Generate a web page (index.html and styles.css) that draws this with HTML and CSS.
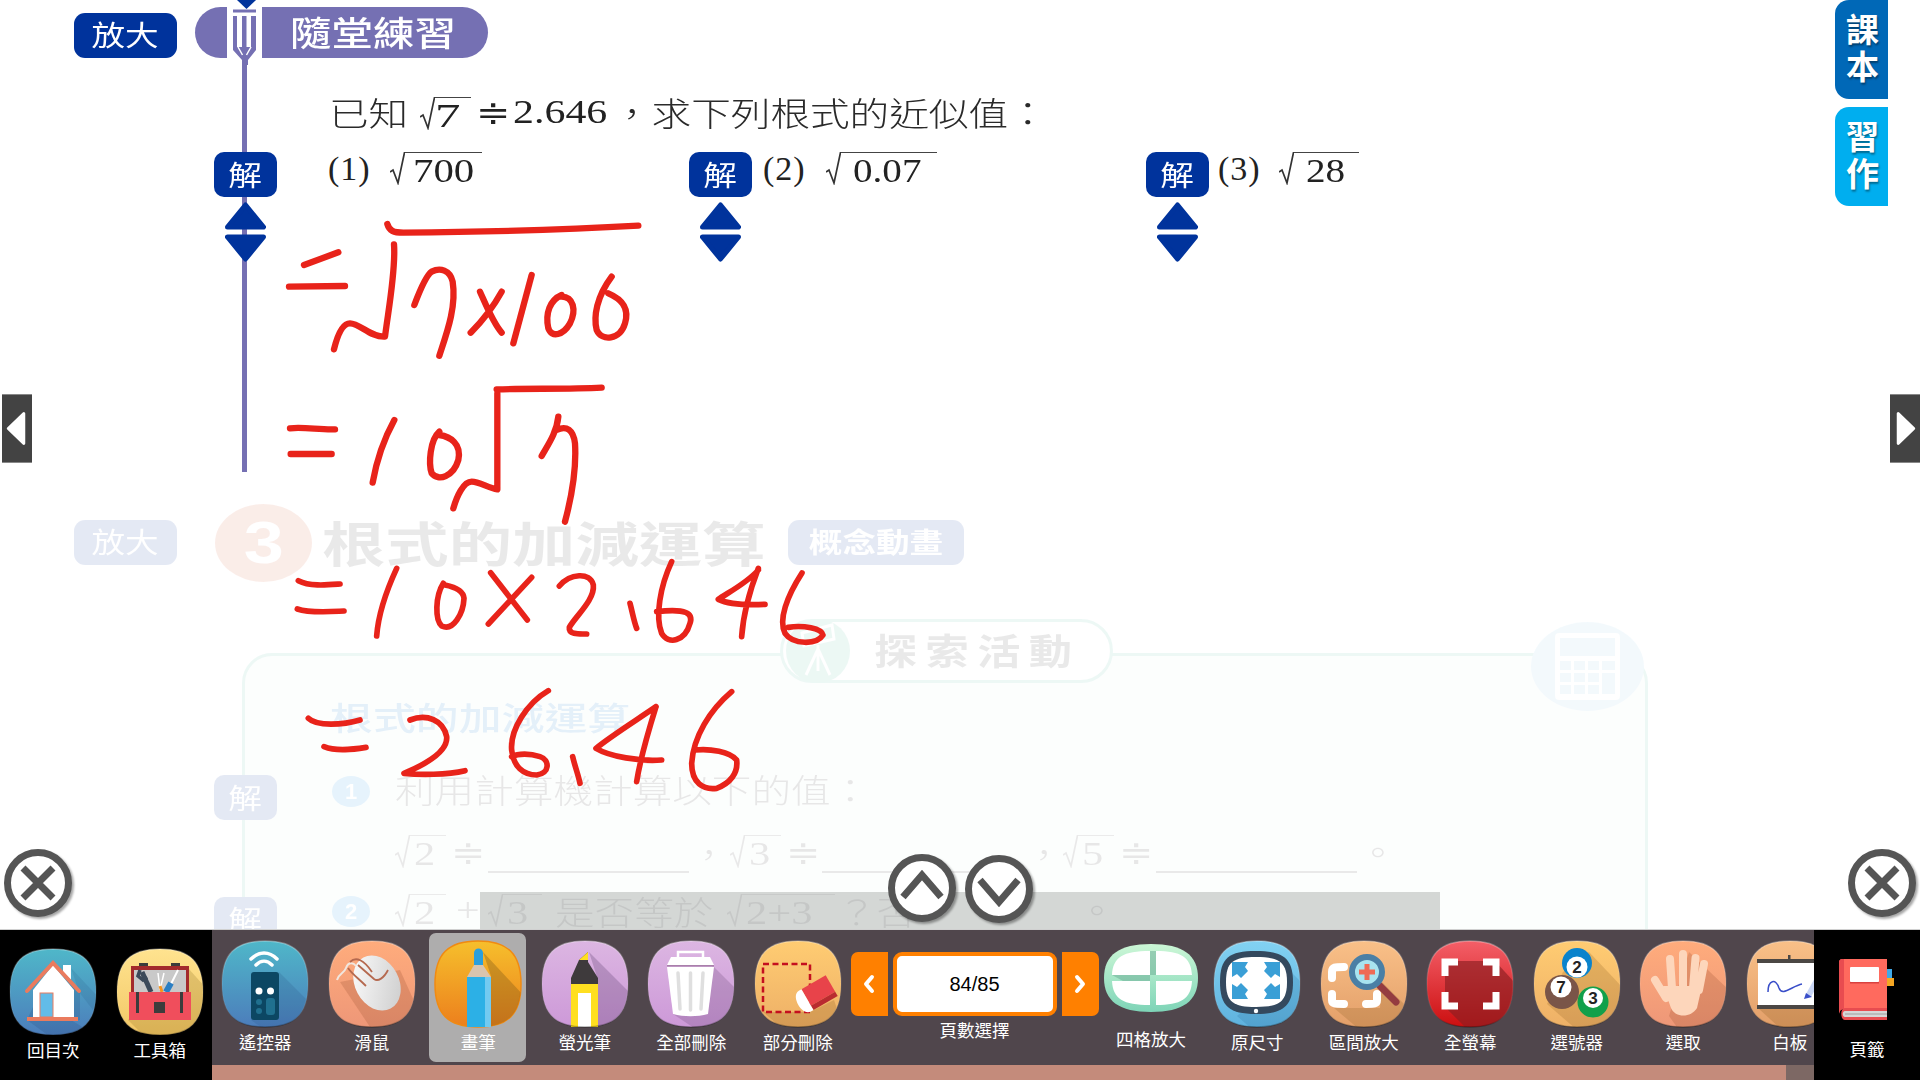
FILE: index.html
```html
<!DOCTYPE html>
<html lang="zh-Hant">
<head>
<meta charset="utf-8">
<title>隨堂練習</title>
<link rel="stylesheet" href="styles.css">
</head>
<body>
<svg class="defs" width="0" height="0" aria-hidden="true">
  <defs>
    <path id="sq" d="M44 1C74 1 87 14 87 44C87 74 74 87 44 87C14 87 1 74 1 44C1 14 14 1 44 1Z"/>
    <clipPath id="sqc"><use href="#sq"/></clipPath>
    <path id="wq" d="M48 1C80 1 95 12 95 35C95 58 80 69 48 69C16 69 1 58 1 35C1 12 16 1 48 1Z"/>
    <linearGradient id="edge" x1="0" y1="0" x2="0" y2="1"><stop offset="0" stop-color="#fff" stop-opacity=".3"/><stop offset=".6" stop-color="#fff" stop-opacity=".05"/><stop offset="1" stop-color="#000" stop-opacity=".3"/></linearGradient>
    <linearGradient id="gblue" x1="0" y1="0" x2="0" y2="1"><stop offset="0" stop-color="#4fb7c9"/><stop offset="1" stop-color="#4c7dbb"/></linearGradient>
    <linearGradient id="gyellow" x1="0" y1="0" x2="0" y2="1"><stop offset="0" stop-color="#ffe38f"/><stop offset="1" stop-color="#f2c766"/></linearGradient>
    <linearGradient id="gsalmon" x1="0" y1="0" x2="0" y2="1"><stop offset="0" stop-color="#ffac7c"/><stop offset="1" stop-color="#ee9778"/></linearGradient>
    <linearGradient id="gorange" x1="0" y1="0" x2="0" y2="1"><stop offset="0" stop-color="#f6bf2c"/><stop offset="1" stop-color="#ec7f1d"/></linearGradient>
    <linearGradient id="gpurple" x1="0" y1="0" x2="0" y2="1"><stop offset="0" stop-color="#dcb6e2"/><stop offset="1" stop-color="#cd99d8"/></linearGradient>
    <linearGradient id="gsand" x1="0" y1="0" x2="0" y2="1"><stop offset="0" stop-color="#ffcc72"/><stop offset="1" stop-color="#eeb067"/></linearGradient>
    <linearGradient id="gpeach" x1="0" y1="0" x2="0" y2="1"><stop offset="0" stop-color="#f9c088"/><stop offset="1" stop-color="#e39f69"/></linearGradient>
    <linearGradient id="gred" x1="0" y1="0" x2="0" y2="1"><stop offset="0" stop-color="#f45f68"/><stop offset="1" stop-color="#cc0f10"/></linearGradient>
    <linearGradient id="gsky" x1="0" y1="0" x2="0" y2="1"><stop offset="0" stop-color="#82d2f2"/><stop offset="1" stop-color="#5fb2de"/></linearGradient>
    <linearGradient id="gmint" x1="0" y1="0" x2="0" y2="1"><stop offset="0" stop-color="#ccf7d6"/><stop offset="1" stop-color="#7ed4b7"/></linearGradient>
    <linearGradient id="gmouse" x1="0" y1="0" x2="1" y2="1"><stop offset="0" stop-color="#fff"/><stop offset="1" stop-color="#c9c9c9"/></linearGradient>
  </defs>
</svg>

<div class="app">
  <main class="canvas">
    <section class="ghost">
      <div class="box"></div>
      <div class="pill-btn zoom2"><span class="sx">放大</span></div>
      <div class="num-badge"><span>3</span></div>
      <div class="t ghead">根式的加減運算</div>
      <div class="pill-btn concept"><span class="sx">概念動畫</span></div>
      <div class="explore">
        <svg class="explore-ic" viewBox="0 0 76 64"><circle cx="38" cy="32" r="32" fill="#4dbf9e"/><path d="M22 14L52 6L54 20L24 27ZM38 26V52M38 30L26 56M38 30L50 56" fill="none" stroke="#fff" stroke-width="3"/></svg>
        <span class="explore-tx">探索活動</span>
      </div>
      <div class="calc">
        <svg viewBox="0 0 113 89"><rect x="24" y="11" width="65" height="67" rx="4" fill="#fff"/><rect x="29" y="16" width="55" height="18" fill="#91cdeb"/><g fill="#91cdeb"><rect x="29" y="39" width="11" height="9"/><rect x="43" y="39" width="11" height="9"/><rect x="57" y="39" width="11" height="9"/><rect x="71" y="39" width="13" height="9"/><rect x="29" y="51" width="11" height="9"/><rect x="43" y="51" width="11" height="9"/><rect x="57" y="51" width="11" height="9"/><rect x="71" y="51" width="13" height="21"/><rect x="29" y="63" width="11" height="9"/><rect x="43" y="63" width="11" height="9"/><rect x="57" y="63" width="11" height="9"/></g></svg>
      </div>
      <div class="t subhead">根式的加減運算</div>
      <div class="sol-ghost s1"><span class="sx">解</span></div>
      <div class="sol-ghost s2"><span class="sx">解</span></div>
      <div class="dot d1">1</div>
      <div class="dot d2">2</div>
      <div class="t q g1">利用計算機計算以下的值：</div>

      <div class="rad a1 w36"><svg viewBox="0 0 15 33"><path d="M0 20L3 18L8 31L14.5 .5H15"/></svg><div class="rad-body short"><span>2</span></div></div>
      <div class="t eq e1">≑</div><div class="ul u1"></div>
      <div class="t q c1">，</div>
      <div class="rad a2 w36"><svg viewBox="0 0 15 33"><path d="M0 20L3 18L8 31L14.5 .5H15"/></svg><div class="rad-body short"><span>3</span></div></div>
      <div class="t eq e2">≑</div><div class="ul u2"></div>
      <div class="t q c2">，</div>
      <div class="rad a3 w36"><svg viewBox="0 0 15 33"><path d="M0 20L3 18L8 31L14.5 .5H15"/></svg><div class="rad-body short"><span>5</span></div></div>
      <div class="t eq e3">≑</div><div class="ul u3"></div>
      <div class="t q p1">。</div>

      <div class="rad a4 w36"><svg viewBox="0 0 15 33"><path d="M0 20L3 18L8 31L14.5 .5H15"/></svg><div class="rad-body short"><span>2</span></div></div>
      <div class="t n plus">+</div>
      <div class="rad a5 w39"><svg viewBox="0 0 15 33"><path d="M0 20L3 18L8 31L14.5 .5H15"/></svg><div class="rad-body short"><span>3</span></div></div>
      <div class="t q g2">是否等於</div>
      <div class="rad a6 w93"><svg viewBox="0 0 15 33"><path d="M0 20L3 18L8 31L14.5 .5H15"/></svg><div class="rad-body short"><span>2+3</span></div></div>
      <div class="t q g3">？否</div>
      <div class="t q p2">。</div>
    </section>
    <div class="ghost-bar"></div>

    <div class="pill-btn zoom1"><span class="sx">放大</span></div>
    <div class="guide"></div>
    <div class="banner">
      <svg class="pencil" viewBox="0 0 35 65">
        <path d="M10 0H29L19.500 9Z" fill="#00339c"/>
        <path d="M6 9.500H29V12.500H6ZM6 16H10V47H6ZM15 16H19.500V47H15ZM24 16H29V47H24Z" fill="#7570b3"/>
        <path d="M6 47H29V50L21 60V65H15V60L6 50Z" fill="#7570b3"/>
        <path d="M11 47L15.500 55M24 47L19.500 55" stroke="#fff" stroke-width="1.500"/>
      </svg>
      <span class="banner-tx">隨堂練習</span>
    </div>

    <div class="t q m1">已知</div>
    <div class="rad m2 w36"><svg viewBox="0 0 15 33"><path d="M0 20L3 18L8 31L14.5 .5H15"/></svg><div class="rad-body main"><span>7</span></div></div>
    <div class="t eq m3">≑</div>
    <div class="t n m4">2.646</div>
    <div class="t q m5">，求下列根式的近似值：</div>

    <div class="sol col1">
      <div class="sol-btn"><span class="sx">解</span></div>
      <svg class="tri" viewBox="0 0 41 28"><path d="M20.500 3L38.500 25H2.500Z"/></svg>
      <svg class="tri down" viewBox="0 0 41 28"><path d="M2.500 3H38.500L20.500 25Z"/></svg>
    </div>
    <div class="t par p-a">(1)</div>
    <div class="rad r1 w77"><svg viewBox="0 0 15 33"><path d="M0 20L3 18L8 31L14.5 .5H15"/></svg><div class="rad-body wide-digits"><span>700</span></div></div>

    <div class="sol col2">
      <div class="sol-btn"><span class="sx">解</span></div>
      <svg class="tri" viewBox="0 0 41 28"><path d="M20.500 3L38.500 25H2.500Z"/></svg>
      <svg class="tri down" viewBox="0 0 41 28"><path d="M2.500 3H38.500L20.500 25Z"/></svg>
    </div>
    <div class="t par p-b">(2)</div>
    <div class="rad r2 w96"><svg viewBox="0 0 15 33"><path d="M0 20L3 18L8 31L14.5 .5H15"/></svg><div class="rad-body"><span>0.07</span></div></div>

    <div class="sol col3">
      <div class="sol-btn"><span class="sx">解</span></div>
      <svg class="tri" viewBox="0 0 41 28"><path d="M20.500 3L38.500 25H2.500Z"/></svg>
      <svg class="tri down" viewBox="0 0 41 28"><path d="M2.500 3H38.500L20.500 25Z"/></svg>
    </div>
    <div class="t par p-c">(3)</div>
    <div class="rad r3 w65"><svg viewBox="0 0 15 33"><path d="M0 20L3 18L8 31L14.5 .5H15"/></svg><div class="rad-body"><span>28</span></div></div>

    <svg class="ink" viewBox="0 0 1920 930">
      <g transform="translate(280 210) scale(.33333)" stroke-width="19">
        <path d="M322 42C328 62 340 68 370 68C600 66 850 60 1075 47"/>
        <path d="M72 165L175 127"/>
        <path d="M27 230L195 228"/>
        <path d="M162 418C170 385 185 340 210 340C240 340 270 382 315 380C325 300 348 180 342 103"/>
        <path d="M403 285C420 240 440 195 455 185C480 172 510 180 518 215C530 290 500 370 478 437"/>
        <path d="M600 245C620 290 640 340 665 368M665 245C640 290 600 340 572 368"/>
        <path d="M755 195L700 400"/>
        <path d="M845 255C810 270 795 310 805 355C815 385 850 375 870 340C890 300 880 260 845 260"/>
        <path d="M995 200C950 260 940 320 950 360C965 395 1020 390 1035 340C1050 290 1020 265 985 250"/>
        <path d="M30 655C70 650 120 660 165 658M32 732L155 732"/>
        <path d="M343 630C310 690 290 750 278 818"/>
        <path d="M478 665C450 690 445 760 455 790C475 815 520 800 535 750C545 700 510 680 478 675"/>
        <path d="M520 895C530 860 550 815 575 815C600 815 625 835 652 838L652 550M650 538C750 535 870 538 965 533"/>
        <path d="M835 620C830 670 800 710 785 738M830 660C860 645 880 660 885 700C890 780 875 860 855 935"/>
      </g>
      <g transform="translate(280 540) scale(.33333)" stroke-width="17">
        <path d="M55 122C90 140 140 135 180 132M52 207C90 220 150 215 192 213"/>
        <path d="M350 85C320 150 295 220 290 288"/>
        <path d="M490 130C465 170 465 240 485 258C520 275 550 220 552 175C550 150 520 140 495 135"/>
        <path d="M632 98L742 240M755 112L625 252"/>
        <path d="M838 138C870 100 930 95 940 135C945 180 885 230 868 262C865 285 900 282 920 282"/>
        <path d="M1050 190C1058 220 1062 245 1070 265"/>
        <path d="M1175 65C1140 140 1125 230 1145 280C1165 315 1215 305 1230 250C1240 220 1220 205 1130 215"/>
        <path d="M1435 90C1400 130 1340 160 1315 178C1350 195 1410 195 1455 193M1435 85C1410 150 1390 220 1385 290"/>
        <path d="M1566 99C1520 170 1495 240 1515 280C1540 315 1610 315 1629 285C1625 265 1570 255 1525 262"/>
        <path d="M85 535C110 560 190 555 240 540M132 620C170 635 220 628 258 622"/>
        <path d="M390 540C440 520 490 540 500 590C505 640 420 680 372 700C420 705 500 705 555 692"/>
        <path d="M805 452C740 490 690 570 695 630C700 680 730 705 770 705C810 700 810 660 780 650C750 640 715 640 695 650"/>
        <path d="M878 650C885 680 895 705 900 730"/>
        <path d="M1128 500C1070 540 990 590 948 625C990 650 1080 665 1145 660M1128 500C1100 590 1080 660 1070 725"/>
        <path d="M1355 455C1290 510 1240 590 1235 670C1235 730 1270 750 1310 745C1350 730 1375 700 1370 660C1350 635 1290 625 1245 630"/>
      </g>
    </svg>

    <div class="tab tab-a">課本</div>
    <div class="tab tab-b">習作</div>

    <div class="edge-arrow left"><svg viewBox="0 0 30 69"><path d="M22 19V50L6 34.500Z"/></svg></div>
    <div class="edge-arrow right"><svg viewBox="0 0 30 69"><path d="M8 19V50L24 34.500Z"/></svg></div>

    <svg class="round close-l" viewBox="0 0 70 70"><circle cx="35" cy="35" r="30.500"/><path d="M20 20L50 50M50 20L20 50"/></svg>
    <svg class="round close-r" viewBox="0 0 70 70"><circle cx="35" cy="35" r="30.500"/><path d="M20 20L50 50M50 20L20 50"/></svg>
    <svg class="round up" viewBox="0 0 70 70"><circle cx="35" cy="35" r="30.500"/><path d="M16 44L35 22L54 44"/></svg>
    <svg class="round dn" viewBox="0 0 70 70"><circle cx="35" cy="35" r="30.500"/><path d="M16 26L35 48L54 26"/></svg>
  </main>

  <footer class="toolbar">
    <div class="dock dock-left">
      <div class="tool">
        <svg class="ic" viewBox="0 0 88 88"><use href="#sq" fill="url(#gblue)"/><g clip-path="url(#sqc)"><path d="M44 15L71 44V72H62L88 88H40L18 72Z" fill="#1c3f6e" opacity=".18"/><path d="M62 20L90 50V70L70 44Z" fill="#1c3f6e" opacity=".12"/></g><path d="M54 17H62V32L54 24Z" fill="#fff"/><path d="M44 17L65 42V69H24V42Z" fill="#fff"/><path d="M18 43L44 15L70 43" fill="none" stroke="#ea7b5e" stroke-width="4" stroke-linecap="round"/><rect x="31" y="45" width="13" height="24" fill="#62bce8" stroke="#ea7b5e"/><rect x="18" y="69" width="51" height="4" fill="#ea7b5e"/><use href="#sq" fill="none" stroke="url(#edge)" stroke-width="1.500"/></svg>
        <span class="lbl">回目次</span>
      </div>
      <div class="tool">
        <svg class="ic" viewBox="0 0 88 88"><use href="#sq" fill="url(#gyellow)"/><g clip-path="url(#sqc)"><path d="M72 20L90 40V90H30L12 72Z" fill="#7a5a10" opacity=".2"/></g><rect x="23" y="15" width="9" height="5" fill="#3c3c3c"/><rect x="55" y="15" width="9" height="5" fill="#3c3c3c"/><rect x="15" y="18" width="58" height="27" fill="#a32a2c"/><rect x="18" y="22" width="52" height="23" fill="#c9c9c9"/><path d="M26 24L35 44" stroke="#3c4a5a" stroke-width="5"/><path d="M24 22L22 28L27 32L31 29" fill="none" stroke="#3c4a5a" stroke-width="3.500"/><path d="M42 25L44 42M48 25L44 42" stroke="#fff" stroke-width="1.500"/><path d="M44 38L46 44" stroke="#f7941d" stroke-width="3"/><path d="M62 22L52 42" stroke="#fff" stroke-width="2"/><path d="M55 35L50 44" stroke="#2b7fc4" stroke-width="6"/><rect x="13" y="44" width="62" height="28" fill="#f04e5c"/><rect x="20" y="44" width="3" height="21" fill="#3c3c3c"/><rect x="64" y="44" width="3" height="21" fill="#3c3c3c"/><rect x="38" y="54" width="11" height="11" fill="#3c3c3c"/><use href="#sq" fill="none" stroke="url(#edge)" stroke-width="1.500"/></svg>
        <span class="lbl">工具箱</span>
      </div>
    </div>

    <div class="dock-mid">
      <div class="dock-row">
        <div class="tool">
          <svg class="ic" viewBox="0 0 88 88"><use href="#sq" fill="url(#gblue)"/><g clip-path="url(#sqc)"><path d="M58 32L90 64V90H44L30 80Z" fill="#1c3f6e" opacity=".15"/></g><path d="M30 19C38 11 48 11 56 19M35 25C40 20 46 20 51 25" fill="none" stroke="#fff" stroke-width="3.500" stroke-linecap="round"/><rect x="30" y="32" width="28" height="48" rx="3" fill="#0c4763"/><circle cx="38" cy="51" r="3.500" fill="#fff"/><circle cx="49.500" cy="51" r="3.500" fill="#fff"/><circle cx="38" cy="62" r="3" fill="#20708f"/><circle cx="38" cy="71" r="3" fill="#20708f"/><rect x="45" y="58" width="9" height="17" rx="3" fill="#20708f"/><use href="#sq" fill="none" stroke="url(#edge)" stroke-width="1.500"/></svg>
          <span class="lbl">遙控器</span>
        </div>
        <div class="tool">
          <svg class="ic" viewBox="0 0 88 88"><use href="#sq" fill="url(#gsalmon)"/><g clip-path="url(#sqc)"><path d="M12 42L72 30L90 70V90H44Z" fill="#a4593a" opacity=".28"/></g><ellipse cx="49" cy="43" rx="22" ry="29" transform="rotate(-28 49 43)" fill="url(#gmouse)"/><path d="M30 25L46 39C50 42 56 38 60 30" fill="none" stroke="#b5694f" stroke-width="1.800"/><path d="M9 40C10 34 16 34 18 28C20 22 25 22 28 26" fill="none" stroke="#f0e6de" stroke-width="2"/><path d="M22 22C28 16 36 20 44 32M20 28C24 34 30 38 38 46" fill="none" stroke="#b5694f" stroke-width="1.800"/><use href="#sq" fill="none" stroke="url(#edge)" stroke-width="1.500"/></svg>
          <span class="lbl">滑鼠</span>
        </div>
        <div class="tool active">
          <svg class="ic" viewBox="0 0 88 88"><use href="#sq" fill="url(#gorange)" stroke="#f08a12" stroke-width="1.500"/><g clip-path="url(#sqc)"><path d="M49 12L90 56V90H57V36Z" fill="#7c5a18" opacity=".35"/></g><path d="M40 13A4.500 4.500 0 0 1 49 13V26H40Z" fill="#2b9fdc"/><path d="M40 25H49L57 37H33Z" fill="#d9c4ae"/><rect x="33" y="37" width="24" height="50" fill="#2cb0e6"/><rect x="51" y="37" width="6" height="50" fill="#72caf1"/></svg>
          <span class="lbl">畫筆</span>
        </div>
        <div class="tool">
          <svg class="ic" viewBox="0 0 88 88"><use href="#sq" fill="url(#gpurple)"/><g clip-path="url(#sqc)"><path d="M48 12L90 54V90H57V40Z" fill="#5a3d6b" opacity=".28"/></g><path d="M38 20L47 12V22L57 38V44H30V38Z" fill="#3e3a3c"/><path d="M38 20L47 12V20H38Z" fill="#ffdf20"/><rect x="30" y="44" width="27" height="43" fill="#ffdf20"/><rect x="37" y="53" width="13" height="34" fill="#fff"/><use href="#sq" fill="none" stroke="url(#edge)" stroke-width="1.500"/></svg>
          <span class="lbl">螢光筆</span>
        </div>
        <div class="tool">
          <svg class="ic" viewBox="0 0 88 88"><use href="#sq" fill="url(#gpurple)"/><g clip-path="url(#sqc)"><path d="M66 26L90 50V90H50L26 74Z" fill="#5a3d6b" opacity=".22"/></g><path d="M31 18V12H56V18" fill="none" stroke="#fff" stroke-width="2.500"/><path d="M24 17H63L67 25H20Z" fill="#fff"/><rect x="20" y="25" width="47" height="1.500" fill="#a880aa"/><path d="M20 27H67L61 74C50 77 37 77 26 74Z" fill="#fff"/><path d="M31 33L33 69M43.500 33V70M56 33L54 69" stroke="#dfdfdf" stroke-width="3.500" stroke-linecap="round"/><use href="#sq" fill="none" stroke="url(#edge)" stroke-width="1.500"/></svg>
          <span class="lbl">全部刪除</span>
        </div>
        <div class="tool">
          <svg class="ic" viewBox="0 0 88 88"><use href="#sq" fill="url(#gsand)"/><g clip-path="url(#sqc)"><path d="M9 72H56L80 60L90 90H30Z" fill="#8a5a20" opacity=".25"/></g><rect x="9" y="24" width="47" height="48" fill="none" stroke="#c40f1f" stroke-width="2.500" stroke-dasharray="6 3.500"/><g transform="rotate(-30 60 57)"><path d="M53 44H81V63H53Z" fill="#e8434a"/><path d="M53 63H81L81 68H53Z" fill="#b92b30"/><path d="M53 44V68H50C40 68 40 44 50 44Z" fill="#fff"/></g><use href="#sq" fill="none" stroke="url(#edge)" stroke-width="1.500"/></svg>
          <span class="lbl">部分刪除</span>
        </div>

        <div class="pager">
          <div class="pager-row">
            <div class="pg-btn prev"><svg viewBox="0 0 12 20"><path d="M9 3L3 10L9 17"/></svg></div>
            <div class="pg-field">84/85</div>
            <div class="pg-btn next"><svg viewBox="0 0 12 20"><path d="M3 3L9 10L3 17"/></svg></div>
          </div>
          <span class="lbl">頁數選擇</span>
        </div>

        <div class="tool wide">
          <svg class="ic-wide" viewBox="0 0 96 70"><use href="#wq" fill="url(#gmint)"/><path d="M47 8C20 8 10 14 9 32H47ZM53 8V32H89C88 14 78 8 53 8ZM9 38C10 56 20 62 47 62V38ZM53 38V62C78 62 88 56 89 38Z" fill="#fff"/><path d="M47 8H53V32L47 32ZM9 32H47V38H20Z" fill="#6fae97" opacity=".55"/></svg>
          <span class="lbl">四格放大</span>
        </div>
        <div class="tool">
          <svg class="ic" viewBox="0 0 88 88"><use href="#sq" fill="url(#gsky)"/><g clip-path="url(#sqc)"><path d="M76 30L90 44V90H40L24 76Z" fill="#1c5f8e" opacity=".18"/></g><path d="M43 11C70 11 80 18 80 42C80 66 70 74 43 74C16 74 7 66 7 42C7 18 16 11 43 11Z" fill="#34495e"/><path d="M43 17C66 17 74 22 74 42C74 62 66 67 43 67C20 67 13 62 13 42C13 22 20 17 43 17Z" fill="#fff"/><circle cx="43" cy="71" r="2.200" fill="#fff"/><g fill="#3a9fd6"><path d="M19 22H35L32 27L35 31L28 38L24 34L19 37Z"/><path d="M67 22H51L54 27L51 31L58 38L62 34L67 37Z"/><path d="M19 59H35L32 54L35 50L28 43L24 47L19 44Z"/><path d="M67 59H51L54 54L51 50L58 43L62 47L67 44Z"/></g><use href="#sq" fill="none" stroke="url(#edge)" stroke-width="1.500"/></svg>
          <span class="lbl">原尺寸</span>
        </div>
        <div class="tool">
          <svg class="ic" viewBox="0 0 88 88"><use href="#sq" fill="url(#gpeach)"/><g clip-path="url(#sqc)"><path d="M14 68H60L62 42L90 70V90H40Z" fill="#8a5a20" opacity=".22"/></g><path d="M12 38V32C12 27 15 27 24 27M12 54V60C12 64 15 64 24 64M57 54V60C57 64 54 64 46 64" fill="none" stroke="#fff" stroke-width="8" stroke-linecap="round"/><path d="M60 46L76 62" stroke="#943c40" stroke-width="7" stroke-linecap="round"/><circle cx="47" cy="32" r="15" fill="#a8e4f0" stroke="#4a7fa5" stroke-width="6"/><path d="M47 24V40M39 32H55" stroke="#ef6a55" stroke-width="5"/><use href="#sq" fill="none" stroke="url(#edge)" stroke-width="1.500"/></svg>
          <span class="lbl">區間放大</span>
        </div>
        <div class="tool">
          <svg class="ic" viewBox="0 0 88 88"><use href="#sq" fill="url(#gred)"/><g clip-path="url(#sqc)"><path d="M19 21H69L90 44V90H42L19 67Z" fill="#8a1f22" opacity=".65"/></g><path d="M32 22H19V36M57 22H70V36M19 52V66H32M70 52V66H57" fill="none" stroke="#fff" stroke-width="7"/><use href="#sq" fill="none" stroke="url(#edge)" stroke-width="1.500"/></svg>
          <span class="lbl">全螢幕</span>
        </div>
        <div class="tool">
          <svg class="ic" viewBox="0 0 88 88"><use href="#sq" fill="url(#gsand)"/><g clip-path="url(#sqc)"><path d="M56 12L90 48V90H44L14 64L30 32Z" fill="#8a5a20" opacity=".22"/></g><circle cx="44" cy="23" r="15" fill="#0a83cc"/><circle cx="44" cy="27" r="10.500" fill="#fff"/><text class="ball" x="44" y="33">2</text><circle cx="29" cy="52" r="17" fill="#7a5548"/><circle cx="28" cy="47" r="10.500" fill="#fff"/><text class="ball" x="28" y="53">7</text><circle cx="60" cy="62" r="15.500" fill="#12a04a"/><circle cx="60" cy="58" r="10" fill="#fff"/><text class="ball" x="60" y="64">3</text><use href="#sq" fill="none" stroke="url(#edge)" stroke-width="1.500"/></svg>
          <span class="lbl">選號器</span>
        </div>
        <div class="tool">
          <svg class="ic" viewBox="0 0 88 88"><use href="#sq" fill="url(#gsalmon)"/><g clip-path="url(#sqc)"><path d="M50 12L90 50V90H40L30 76Z" fill="#a4593a" opacity=".28"/></g><path d="M31 19L33 48M44 14V48M56.500 18L54 48M65 24L60 50M16 40L27 58" stroke="#fdd6bb" stroke-width="8" stroke-linecap="round"/><path d="M24 46H63L58 68C52 78 36 78 32 68Z" fill="#fdd6bb"/><use href="#sq" fill="none" stroke="url(#edge)" stroke-width="1.500"/></svg>
          <span class="lbl">選取</span>
        </div>
        <div class="tool">
          <svg class="ic" viewBox="0 0 88 88"><use href="#sq" fill="url(#gpeach)"/><g clip-path="url(#sqc)"><path d="M12 68H80V90H36Z" fill="#8a5a20" opacity=".25"/></g><rect x="42" y="15" width="2.500" height="5" fill="#4b4744"/><rect x="11" y="19" width="77" height="4" fill="#4b4744"/><rect x="12" y="23" width="76" height="42" fill="#fff"/><rect x="11" y="65" width="77" height="4" fill="#4b4744"/><path d="M22 52C22 40 30 38 33 48C36 57 46 46 56 44" fill="none" stroke="#3a4fc9" stroke-width="1.500"/><path d="M60 54L70 36L75 39L65 57Z" fill="#c9d6f5"/><path d="M58 59L60 53L66 57Z" fill="#3a4fc9"/><use href="#sq" fill="none" stroke="url(#edge)" stroke-width="1.500"/></svg>
          <span class="lbl">白板</span>
        </div>
      </div>
      <div class="dock-strip"><div class="strip-a"></div><div class="strip-b"></div></div>
    </div>

    <div class="dock dock-right">
      <div class="tool book">
        <svg class="ic-book" viewBox="0 0 56 62"><rect x="48" y="10" width="5" height="9" fill="#3fa9e8"/><rect x="48" y="19" width="7" height="8" fill="#f5a623"/><path d="M2 0H48V50H5C2 50 0 52 0 56V2Z" fill="#ff6a5e"/><path d="M2 0H5V50C2 50 0 52 0 56V2Z" fill="#e84c50"/><rect x="11" y="8" width="29" height="15" rx="1" fill="#fff"/><rect x="11" y="23" width="29" height="1.500" fill="#d9413f"/><path d="M48 49H6C1 49 1 61 6 61H48Z" fill="#e84c50"/><path d="M48 52H6C3 52 3 58 6 58H48Z" fill="#d6d6d6"/><path d="M6 55H48" stroke="#9e9e9e"/></svg>
        <span class="lbl">頁籤</span>
      </div>
    </div>
  </footer>
</div>
</body>
</html>
```

FILE: styles.css
```css
* { box-sizing: border-box; }
html, body { margin: 0; height: 100%; background: #fff; overflow: hidden; }
body { font-family: "Noto Sans CJK TC", "Noto Sans", sans-serif; }

.defs { position: absolute; }
.app { display: flex; flex-direction: column; width: 1920px; height: 1080px; }

/* ---------- canvas ---------- */
.canvas { position: relative; flex: none; height: 930px; overflow: hidden; border-bottom: 1px solid #d0d0d0; }
.t { position: absolute; white-space: nowrap; line-height: 1; transform-origin: left center; }
.sx { display: inline-block; transform: scaleX(1.2); line-height: 1; }
.q { font-size: 33px; font-weight: 300; color: #2a2a2a; transform: scaleX(1.2); }
.n { font-family: "Liberation Serif", serif; font-size: 33px; color: #222; transform: scaleX(1.27); }
.eq { font-family: "DejaVu Sans", sans-serif; font-size: 33px; color: #222; transform: scaleX(1.25); }
.par { font-family: "Liberation Serif", serif; font-size: 34px; color: #222; top: 152px; letter-spacing: 1px; }

.pill-btn { position: absolute; display: flex; align-items: center; justify-content: center; height: 45px; padding-bottom: 3px; border-radius: 11px; background: #00339c; color: #fff; font-size: 28px; }
.zoom1 { left: 74px; top: 13px; width: 103px; }

.guide { position: absolute; left: 242px; top: 60px; width: 5px; height: 412px; background: #7570b3; }
.banner { position: absolute; left: 195px; top: 7px; width: 293px; height: 51px; border-radius: 26px; background: #7570b3; }
.pencil { position: absolute; left: 32px; top: -7px; width: 35px; height: 65px; background: #fff; }
.banner-tx { position: absolute; left: 95px; top: 8px; font-size: 34px; line-height: 1; font-weight: 500; color: #fff; transform: scaleX(1.22); transform-origin: left center; white-space: nowrap; }

.m1 { left: 329px; top: 96px; }
.m2 { left: 420px; top: 97px; }
.m3 { left: 476px; top: 96px; }
.m4 { left: 513px; top: 96px; }
.m5 { left: 612px; top: 96px; }

.rad { position: absolute; display: flex; height: 34px; }
.rad svg { flex: none; width: 15px; height: 33px; }
.rad svg path { fill: none; stroke: #333; stroke-width: 1.700; }
.rad-body { height: 33px; border-top: 1px solid #444; font-family: "Liberation Serif", serif; font-size: 34px; line-height: 1; color: #222; white-space: nowrap; }
.rad-body span { display: inline-block; margin: 1px 0 0 12px; transform: scaleX(1.15); transform-origin: left center; }
.rad-body.wide-digits span { margin-left: 8px; transform: scaleX(1.2); }
.rad-body.short span { margin-left: 4px; transform: scaleX(1.25); }
.rad-body.main span { margin-left: 0; font-size: 34px; transform: scaleX(1.5); }
.w36 .rad-body { width: 36px; }
.w39 .rad-body { width: 39px; }
.w65 .rad-body { width: 65px; }
.w77 .rad-body { width: 77px; }
.w93 .rad-body { width: 93px; }
.w96 .rad-body { width: 96px; }
.r1 { left: 390px; top: 152px; }
.r2 { left: 826px; top: 152px; }
.r3 { left: 1279px; top: 152px; }
.p-a { left: 328px; }
.p-b { left: 763px; }
.p-c { left: 1218px; }

.sol { position: absolute; top: 152px; display: flex; flex-direction: column; align-items: center; width: 63px; }
.col1 { left: 214px; }
.col2 { left: 689px; }
.col3 { left: 1146px; }
.sol-btn { display: flex; align-items: center; justify-content: center; width: 63px; height: 45px; padding-bottom: 2px; border-radius: 10px; background: #00339c; color: #fff; font-size: 28px; }
.tri { flex: none; width: 41px; height: 28px; margin-top: 5px; }
.tri.down { margin-top: 4px; }
.tri path { fill: #00339c; stroke: #00339c; stroke-width: 5; stroke-linejoin: round; }

.ink { position: absolute; left: 0; top: 0; width: 1920px; height: 930px; pointer-events: none; }
.ink path { fill: none; stroke: #e8231a; stroke-linecap: round; stroke-linejoin: round; }

/* ---------- faded section ---------- */
.ghost { position: absolute; inset: 0; opacity: .1; }
.ghost .q, .ghost .n, .ghost .eq { color: #222; }
.zoom2 { left: 74px; top: 520px; width: 103px; }
.concept { left: 788px; top: 520px; width: 176px; font-weight: 700; }
.num-badge { position: absolute; left: 215px; top: 504px; width: 97px; height: 78px; border-radius: 50%; background: #d7552d; display: flex; align-items: center; justify-content: center; }
.num-badge span { font-family: "Liberation Sans", sans-serif; font-weight: 700; font-size: 60px; line-height: 1; color: #fff; transform: scaleX(1.2); }
.ghead { left: 322px; top: 517px; font-size: 48px; font-weight: 700; color: #333; transform: scaleX(1.32); }
.box { position: absolute; left: 242px; top: 653px; width: 1406px; height: 400px; border: 3px solid #55c0a8; border-radius: 30px; background: #ebf6f3; }
.explore { position: absolute; left: 780px; top: 619px; width: 333px; height: 64px; border: 3px solid #55c0a8; border-radius: 32px; background: #fff; }
.explore-ic { position: absolute; left: -3px; top: -3px; width: 76px; height: 64px; }
.explore-tx { position: absolute; left: 91px; top: 9px; font-size: 36px; line-height: 1; font-weight: 700; color: #333; letter-spacing: 7px; white-space: nowrap; transform: scaleX(1.2); transform-origin: left center; }
.calc { position: absolute; left: 1531px; top: 622px; width: 113px; height: 89px; border-radius: 50%; background: #91cdeb; }
.calc svg { display: block; width: 113px; height: 89px; }
.subhead { left: 330px; top: 700px; font-size: 32px; font-weight: 500; color: #0073cd; transform: scaleX(1.34); }
.sol-ghost { position: absolute; left: 214px; width: 63px; height: 45px; padding-bottom: 2px; border-radius: 10px; background: #00339c; color: #fff; font-size: 28px; display: flex; align-items: center; justify-content: center; }
.s1 { top: 775px; }
.s2 { top: 897px; }
.dot { position: absolute; left: 332px; width: 38px; height: 31px; border-radius: 50%; background: #1296e8; color: #fff; font: 700 22px/31px "Liberation Sans", sans-serif; text-align: center; }
.d1 { top: 776px; }
.d2 { top: 896px; }
.g1 { left: 395px; top: 773px; }
.a1 { left: 395px; top: 835px; }
.a2 { left: 730px; top: 835px; }
.a3 { left: 1063px; top: 835px; }
.a4 { left: 395px; top: 894px; }
.a5 { left: 488px; top: 894px; }
.a6 { left: 727px; top: 894px; }
.e1 { left: 451px; top: 836px; }
.e2 { left: 786px; top: 836px; }
.e3 { left: 1119px; top: 836px; }
.ul { position: absolute; top: 871px; height: 2px; background: #333; }
.u1 { left: 488px; width: 201px; }
.u2 { left: 822px; width: 201px; }
.u3 { left: 1156px; width: 201px; }
.c1 { left: 689px; top: 837px; }
.c2 { left: 1024px; top: 837px; }
.p1 { left: 1358px; top: 835px; }
.p2 { left: 1077px; top: 893px; }
.plus { left: 456px; top: 894px; }
.g2 { left: 555px; top: 895px; }
.g3 { left: 837px; top: 895px; }
.ghost-bar { position: absolute; left: 480px; top: 892px; width: 960px; height: 37px; background: rgba(118, 126, 122, .3); }

/* ---------- side tabs & buttons ---------- */
.tab { position: absolute; left: 1835px; width: 53px; height: 99px; padding-left: 1px; border-radius: 14px 0 0 14px; display: flex; align-items: center; justify-content: center; writing-mode: vertical-rl; color: #fff; font-size: 33px; font-weight: 700; letter-spacing: 3.500px; line-height: 1; text-shadow: 1px 2px 2px rgba(0, 0, 0, .4); }
.tab-a { top: 0; background: #0068b7; }
.tab-b { top: 107px; background: #00aeef; }

.edge-arrow { position: absolute; top: 394px; width: 30px; height: 69px; background: #434343; border-top: 1px solid #888; border-bottom: 1px solid #888; }
.edge-arrow.left { left: 2px; }
.edge-arrow.right { left: 1890px; }
.edge-arrow svg { display: block; width: 30px; height: 67px; }
.edge-arrow path { fill: #fff; stroke: #fff; stroke-width: 3; stroke-linejoin: round; }

.round { position: absolute; width: 70px; height: 70px; filter: drop-shadow(2px 2px 1px rgba(0, 0, 0, .35)); }
.round circle { fill: #fff; stroke: #555; stroke-width: 7; }
.round path { fill: none; stroke: #555; stroke-width: 7; }
.close-l { left: 3px; top: 848px; }
.close-r { left: 1847px; top: 848px; }
.up { left: 887px; top: 853px; }
.dn { left: 964px; top: 854px; }

/* ---------- toolbar ---------- */
.toolbar { display: flex; flex: none; height: 150px; background: #50464c; }
.dock { display: flex; flex: none; padding-top: 18px; background: #000; }
.dock-left { width: 212px; }
.dock-right { width: 106px; }
.dock-mid { display: flex; flex-direction: column; flex: 1; min-width: 0; overflow: hidden; }
.dock-row { display: flex; flex: none; height: 135px; padding-top: 10px; }
.dock-strip { display: flex; flex: none; height: 15px; }
.strip-a { flex: 1; background: #c48b7b; }
.strip-b { flex: none; width: 28px; background: #7d6864; }

.tool { position: relative; display: flex; flex-direction: column; align-items: center; flex: none; width: 106.500px; }
.ic { position: relative; display: block; flex: none; width: 88px; height: 88px; }
.lbl { position: relative; display: block; margin-top: 2px; color: #fff; font-size: 17.500px; line-height: 24px; white-space: nowrap; }
.tool.active::before { content: ""; position: absolute; left: 4px; top: -7px; width: 97px; height: 129px; border-radius: 7px; background: #aeadad; }
.tool.wide { width: 106px; }
.ic-wide { display: block; width: 96px; height: 70px; margin-top: 3px; }
.wide .lbl { margin-top: 14px; }
.dock-right .tool { width: 106px; }
.ic-book { display: block; width: 56px; height: 62px; margin: 11px 0 16px; }
.book .lbl { margin-top: 0; }
.ball { font-family: "Liberation Sans", sans-serif; font-weight: 700; font-size: 17px; fill: #222; text-anchor: middle; }

.pager { display: flex; flex-direction: column; align-items: center; flex: none; width: 247px; }
.pager-row { display: flex; gap: 5px; margin-top: 12px; height: 64px; }
.pager .lbl { margin-top: 2px; }
.pg-btn { display: flex; align-items: center; justify-content: center; width: 37px; background: #ff8000; }
.pg-btn svg { width: 12px; height: 20px; }
.pg-btn path { fill: none; stroke: #fff; stroke-width: 4; stroke-linecap: round; stroke-linejoin: round; }
.prev { border-radius: 7px 0 0 7px; }
.next { border-radius: 0 7px 7px 0; }
.pg-field { display: flex; align-items: center; justify-content: center; width: 164px; border: 4px solid #ff8000; border-radius: 9px; background: #fff; color: #000; font: 20px/1 "Liberation Sans", sans-serif; }
```
